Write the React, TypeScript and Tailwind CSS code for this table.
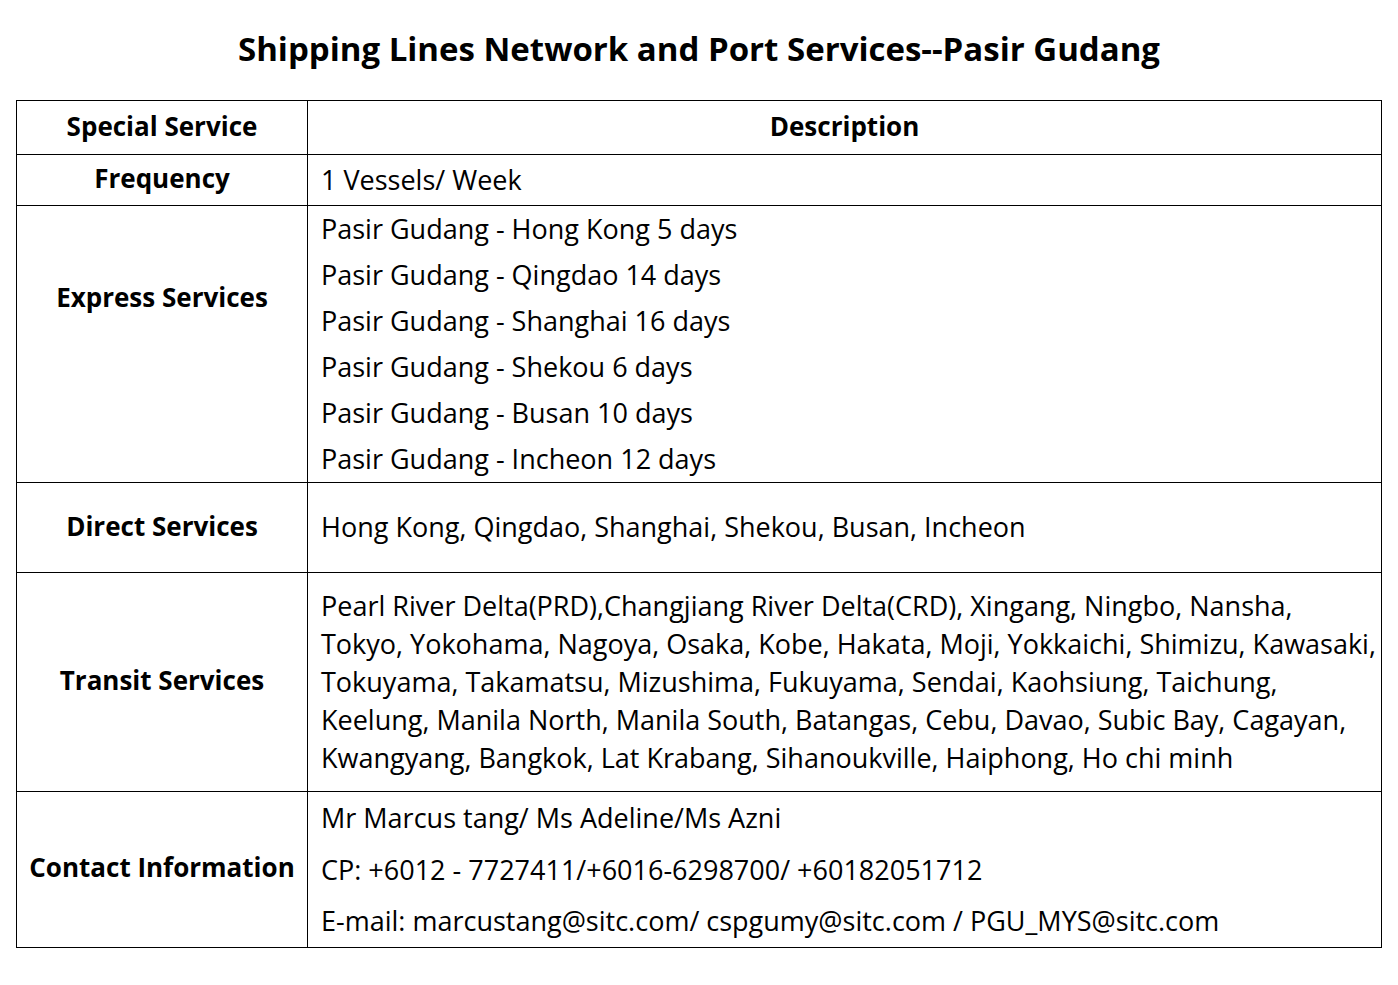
import React from 'react';

const express = [
  'Pasir Gudang - Hong Kong 5 days',
  'Pasir Gudang - Qingdao 14 days',
  'Pasir Gudang - Shanghai 16 days',
  'Pasir Gudang - Shekou 6 days',
  'Pasir Gudang - Busan 10 days',
  'Pasir Gudang - Incheon 12 days',
];

const transit = [
  'Pearl River Delta(PRD),Changjiang River Delta(CRD), Xingang, Ningbo, Nansha,',
  'Tokyo, Yokohama, Nagoya, Osaka, Kobe, Hakata, Moji, Yokkaichi, Shimizu, Kawasaki,',
  'Tokuyama, Takamatsu, Mizushima, Fukuyama, Sendai, Kaohsiung, Taichung,',
  'Keelung, Manila North, Manila South, Batangas, Cebu, Davao, Subic Bay, Cagayan,',
  'Kwangyang, Bangkok, Lat Krabang, Sihanoukville, Haiphong, Ho chi minh',
];

const contact = [
  'Mr Marcus tang/ Ms Adeline/Ms Azni',
  'CP: +6012 - 7727411/+6016-6298700/ +60182051712',
  'E-mail: marcustang@sitc.com/ cspgumy@sitc.com / PGU_MYS@sitc.com',
];

export default function App() {
  return (
    <div className="min-h-[985px] bg-white text-black font-['Open_Sans','Noto_Sans',sans-serif]">
      <h1 className="h-[100px] flex items-center justify-center pb-[2px] text-[33px] font-bold">
        Shipping Lines Network and Port Services--Pasir Gudang
      </h1>

      <table className="ml-[16px] w-[1366px] border-collapse table-fixed text-[27px]">
        <colgroup>
          <col className="w-[291px]" />
          <col />
        </colgroup>
        <tbody>
          <tr className="h-[54px]">
            <Head>Special Service</Head>
            <td className="border border-black text-center font-bold text-[26px] pb-[2px]">Description</td>
          </tr>
          <tr className="h-[51px]">
            <Head>Frequency</Head>
            <Cell>1 Vessels/ Week</Cell>
          </tr>
          <tr className="h-[275px]">
            <td className="border border-black text-center font-bold text-[26px] whitespace-nowrap p-0 pt-[72px] align-top leading-[38px]">
              Express Services
            </td>
            <Cell>
              {express.map((l) => (
                <div key={l} className="leading-[46px] whitespace-nowrap">{l}</div>
              ))}
            </Cell>
          </tr>
          <tr className="h-[90px]">
            <Head>Direct Services</Head>
            <Cell>Hong Kong, Qingdao, Shanghai, Shekou, Busan, Incheon</Cell>
          </tr>
          <tr className="h-[219px]">
            <Head>Transit Services</Head>
            <Cell>
              {transit.map((l) => (
                <div key={l} className="leading-[38px] whitespace-nowrap">{l}</div>
              ))}
            </Cell>
          </tr>
          <tr className="h-[155px]">
            <Head>Contact Information</Head>
            <Cell>
              {contact.map((l) => (
                <div key={l} className="leading-[51.5px] whitespace-nowrap">{l}</div>
              ))}
            </Cell>
          </tr>
        </tbody>
      </table>
    </div>
  );
}

function Head({ children }: { children: React.ReactNode }) {
  return (
    <td className="border border-black text-center font-bold text-[26px] whitespace-nowrap p-0 pb-[3px]">
      {children}
    </td>
  );
}

function Cell({ children }: { children: React.ReactNode }) {
  return <td className="border border-black p-0 pl-[13px] align-middle">{children}</td>;
}
